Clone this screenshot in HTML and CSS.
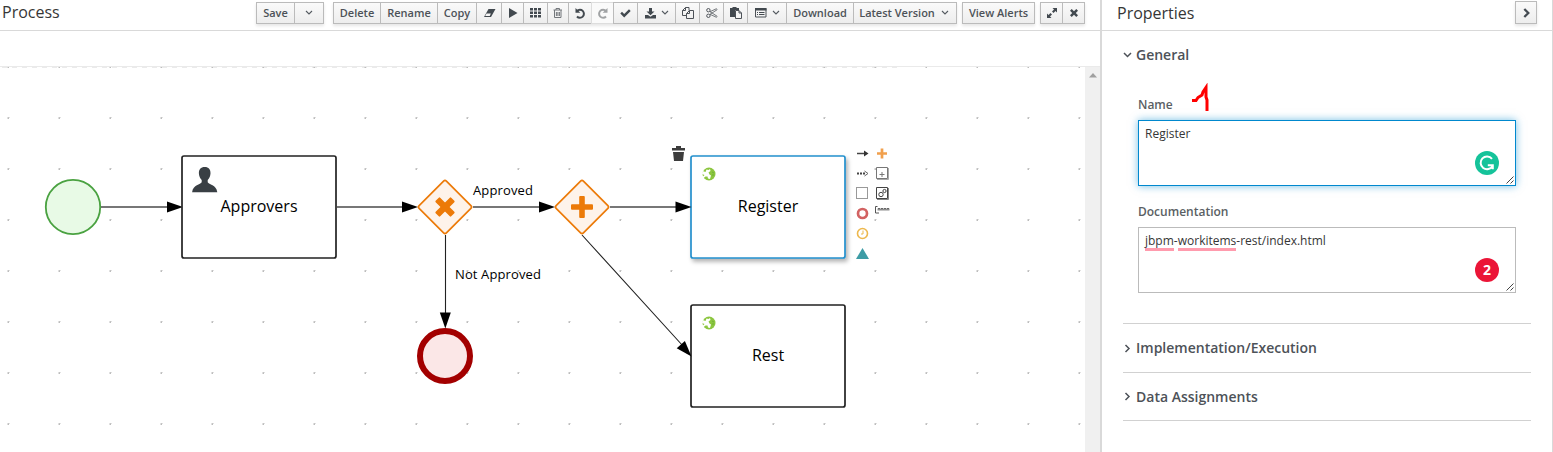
FILE: index.html
```
<!DOCTYPE html>
<html lang="en">
<head>
<meta charset="utf-8">
<title>Process</title>
<link rel="stylesheet" href="styles.css">
</head>
<body>
<div class="app">
  <main class="editor">
    <header class="toolbar">
      <h1 class="title">Process</h1>
      <div class="actions">
        <div class="group">
          <button class="btn w38">Save</button>
          <button class="btn w29"><svg width="8" height="6" viewBox="0 0 8 6"><path class="line" d="M1 1l3 3 3-3"/></svg></button>
        </div>
        <div class="group main-group">
          <button class="btn w47">Delete</button>
          <button class="btn w57">Rename</button>
          <button class="btn w39">Copy</button>
          <button class="btn w25"><svg width="13" height="10" viewBox="0 0 13 10"><path d="M5.500 1h7L8 9H1z"/><path d="M3.500 5.600h4.300L6.800 8H2.200z" fill="#f5f5f5" class="paper"/></svg></button>
          <button class="btn w22"><svg width="10" height="10" viewBox="0 0 10 10"><path d="M1 0l8.500 5L1 10z"/></svg></button>
          <button class="btn w24"><svg width="12" height="10" viewBox="0 0 12 10"><path d="M0 0h3v2.500H0zM4 0h3v2.500H4zM8 0h3v2.500H8zM0 3.500h3V6H0zM4 3.500h3V6H4zM8 3.500h3V6H8zM0 7h3v2.500H0zM4 7h3v2.500H4zM8 7h3v2.500H8z"/></svg></button>
          <button class="btn w21"><svg width="10" height="10" viewBox="0 0 10 10"><path class="thin soft" d="M.5 2h8.500M3 2V.5h3.500V2M1.500 2v7.500h6.500V2M3.400 4v4M4.900 4v4M6.400 4v4"/></svg></button>
          <button class="btn w23"><svg width="11" height="11" viewBox="0 0 11 11"><path class="bold" d="M2 3a4 4 0 1 1 0 5.500"/><path d="M.5 0v4.800h4.800z"/></svg></button>
          <button class="btn w22 disabled"><svg width="11" height="11" viewBox="0 0 11 11"><path class="bold" d="M9 3a4 4 0 1 0 0 5.500"/><path d="M10.500 0v4.800H5.700z"/></svg></button>
          <button class="btn w24"><svg width="11" height="9" viewBox="0 0 11 9"><path d="M.3 4.500l1.700-1.700 2.200 2.200L9 .3 10.700 2 4.200 8.500z"/></svg></button>
          <button class="btn w38"><svg width="11" height="11" viewBox="0 0 11 11"><path d="M4 0h3v3.500h2.500L5.500 7.300 1.500 3.500H4zM0 7h3l2.500 1.800L8 7h3v3.500H0z"/></svg><svg class="caret" width="8" height="6" viewBox="0 0 8 6"><path class="line" d="M1 1l3 3 3-3"/></svg></button>
          <button class="btn w24"><svg width="12" height="12" viewBox="0 0 12 12"><path class="thin" d="M3.500.5H7v3M3.500.5L.5 3.500v5H4.500M3.500.5v3h-3M7.500 3.500h4v8h-7V6.500zM7.500 3.500v3h-3"/></svg></button>
          <button class="btn w24"><svg width="12" height="10" viewBox="0 0 12 10"><path class="thin soft" d="M4 3.700L11 8.200M4 6.300L11 1.800M4 3.700l6.500-3 .7 1M4 6.300l6.500 3 .7-1"/><circle class="thin" cx="2.400" cy="2.200" r="1.700"/><circle class="thin" cx="2.400" cy="7.800" r="1.700"/></svg></button>
          <button class="btn w24"><svg width="12" height="12" viewBox="0 0 12 12"><path d="M0 1h2.500V0h4v1H9v2H5v7H0z"/><path class="thin paper" d="M5.500 3.500H9L11.500 6v5.500h-6zM9 3.500V6h2.500"/></svg></button>
          <button class="btn w39"><svg width="12" height="10" viewBox="0 0 12 10"><path class="thin" d="M.5.5h10.500v8.500H.5z"/><path d="M0 0h11.500v2.500H0zM2 4h1v1H2zM4 4h5.500v1H4zM2 6h1v1H2zM4 6h5.500v1H4z"/></svg><svg class="caret" width="8" height="6" viewBox="0 0 8 6"><path class="line" d="M1 1l3 3 3-3"/></svg></button>
          <button class="btn w67">Download</button>
          <button class="btn w103">Latest Version<svg class="caret wide" width="8" height="6" viewBox="0 0 8 6"><path class="line" d="M1 1l3 3 3-3"/></svg></button>
        </div>
        <div class="group"><button class="btn w72">View Alerts</button></div>
        <div class="group">
          <button class="btn w22"><svg width="10" height="10" viewBox="0 0 10 10"><path d="M5.500 0H10v4.500L8.500 3 6.500 5 5 3.500l2-2zM0 5.500L1.500 7l2-2L5 6.500l-2 2L4.500 10H0z"/></svg></button>
          <button class="btn w22"><svg width="8" height="8" viewBox="0 0 8 8"><path d="M1.700 0L4 2.200 6.300 0 8 1.700 5.800 4 8 6.300 6.300 8 4 5.800 1.700 8 0 6.300 2.200 4 0 1.700z"/></svg></button>
        </div>
      </div>
    </header>
    <div class="tabs"></div>
    <div class="workspace">
      <svg class="canvas" width="1085" height="385" viewBox="0 67 1085 385">
        <defs>
          <pattern id="grid" x="7" y="64" width="51" height="51" patternUnits="userSpaceOnUse">
            <rect x="0.500" y="2" width="2" height="1" fill="#c4c4c4"/><rect x="0.500" y="3" width="1.500" height="1" fill="#bcbcbc"/>
          </pattern>
          <filter id="shadow" x="-10%" y="-10%" width="125%" height="125%"><feDropShadow dx="2" dy="3" stdDeviation="2" flood-color="#000" flood-opacity=".3"/></filter>
          <g id="service">
            <circle r="6.500" fill="#8cc63f"/>
            <path d="M-6.500-3l3 1 1-2.500 2 .5 1.500-1 .5 2-2 1.500 1 2 1.500 1-1 3.500-2-.5-.5-2-2 0-2.500 2-.5-1.500 2-2-2.500-1z" fill="#fff"/>
            <path d="M3-2l2 1M3 1h2" stroke="#65a834" stroke-width=".7"/>
          </g>
          <path id="arrow" d="M0 0l-16-5.500v11z"/>
        </defs>
        <path d="M2 67.500h895" stroke="#ebebeb" stroke-dasharray="5 5"/>
        <rect x="0" y="67" width="1085" height="385" fill="url(#grid)"/>

        <g class="flow">
          <path d="M101 207h70M337 207h68M473 207h69M610 207h68"/>
          <path class="fine" d="M445.500 235v80M582 235l101 111"/>
        </g>
        <use href="#arrow" x="183" y="207"/>
        <use href="#arrow" x="418" y="207"/>
        <use href="#arrow" x="555" y="207"/>

        <circle cx="73" cy="207" r="27.200" fill="#e8fae6" stroke="#4aa241" stroke-width="1.800"/>

        <rect class="task" x="182" y="156" width="154" height="102" rx="2"/>
        <path d="M204.700 167c4 0 6 2.500 5.800 6.500-.2 3-1.300 5-2.800 6.500v2.300c1.200 2.400 8.500 2.200 9.600 9.900h-25.200c1.100-7.700 8.400-7.500 9.600-9.900V180c-1.500-1.500-2.600-3.500-2.800-6.500-.2-4 1.800-6.500 5.800-6.500z" fill="#393f44"/>
        <text class="name" x="259" y="212">Approvers</text>

        <g class="gateway">
          <rect x="425.700" y="187.700" width="38.600" height="38.600" rx="2" transform="rotate(45 445 207)"/>
          <rect x="562.700" y="187.700" width="38.600" height="38.600" rx="2" transform="rotate(45 582 207)"/>
        </g>
        <g class="cross">
          <g transform="rotate(45 445 207)"><rect x="441.800" y="196" width="6.400" height="22" rx="1"/><rect x="434" y="203.800" width="22" height="6.400" rx="1"/></g>
          <rect x="579.200" y="196" width="5.600" height="22" rx="1"/><rect x="571" y="204.200" width="22" height="5.600" rx="1"/>
        </g>

        <text class="label" x="473" y="195" textLength="60">Approved</text>
        <text class="label" x="455" y="279" textLength="86">Not Approved</text>

        <circle cx="445" cy="356" r="25" fill="#fbe7e7" stroke="#a30000" stroke-width="6"/>
        <use href="#arrow" transform="translate(445.300 328.500) rotate(90)"/>

        <rect class="task selected" x="691" y="156" width="154" height="102" rx="2" filter="url(#shadow)"/>
        <use href="#arrow" x="691.500" y="207"/>
        <use href="#service" x="709" y="174"/>
        <text class="name" x="768" y="212">Register</text>

        <rect class="task" x="691" y="305" width="154" height="102" rx="2"/>
        <use href="#arrow" transform="translate(691.500 356.500) rotate(48)"/>
        <use href="#service" x="709" y="323"/>
        <text class="name" x="768" y="361">Rest</text>

        <path d="M672 148h4v-2h5v2h4v2.500h-13zM673 152h11l-1 9h-9z" fill="#3c3c3c"/>

        <g fill="none" stroke="#444">
          <path d="M857 153.500h9" stroke-width="1.500"/><path d="M864 150.500l4.500 3-4.500 3z" fill="#333" stroke="none"/>
          <path d="M857 173.500h8" stroke-width="1.800" stroke-dasharray="2 1"/><path d="M864.500 171l3.500 2.500-3.500 2.500" stroke="#666"/>
          <rect x="856.500" y="187.500" width="11" height="11" stroke="#999"/>
          <circle cx="862.500" cy="213.500" r="4.500" stroke="#d26262" stroke-width="2.700"/>
          <circle cx="862.500" cy="233.500" r="5" stroke="#edb84d" stroke-width="1.600"/><path d="M863 230.500v3.500h-2" stroke="#edb84d"/>
          <path d="M862.500 248l6.500 11h-13z" fill="#3d9ca5" stroke="none"/>
          <path d="M882 148.500v10M877 153.500h10" stroke="#f1a04d" stroke-width="2.700"/>
          <path d="M876.500 167.500h11v11h-11z" stroke="#777"/><path d="M888.500 168v11.500H877" stroke="#aaa"/><path d="M882 172v5M879.500 174.500h5" stroke="#777"/>
          <path d="M876.500 187.500h11v11h-11z"/><path d="M888.500 188v11.500H877" stroke="#888"/><circle cx="881" cy="194.500" r="2.200"/><circle cx="884.500" cy="191" r="1.600"/>
          <path d="M877.500 206.500h-2v6.500h3.500" stroke="#555"/><path d="M877.500 209.500h12" stroke="#8c8c8c" stroke-width="2"/><path d="M878 208.500h11" stroke="#666" stroke-dasharray="2 1"/>
        </g>
      </svg>
      <div class="scrollbar"><svg width="8" height="5" viewBox="0 0 8 5"><path d="M4 0l4 4.500H0z" fill="#9f9f9f"/></svg></div>
    </div>
  </main>

  <aside class="properties">
    <header class="panel-head">
      <h2 class="title">Properties</h2>
      <button class="collapse"><svg width="7" height="10" viewBox="0 0 7 10"><path d="M1.300 1l4 4-4 4" fill="none" stroke="#444b52" stroke-width="2.300"/></svg></button>
    </header>
    <div class="sections">
      <section class="general">
        <h3 class="section-title"><svg width="9" height="8" viewBox="0 0 9 8"><path class="chev" d="M1 2l3.500 3.500L8 2"/></svg>General</h3>
        <div class="field">
          <div class="field-label">Name</div>
          <div class="area focused">Register
            <span class="badge"><svg width="24" height="24" viewBox="0 0 24 24"><circle cx="12" cy="12" r="12" fill="#15c39a"/><path d="M17 7.800A6.400 6.400 0 1 0 17.600 15M12.800 14.300h5v4" fill="none" stroke="#fff" stroke-width="2"/></svg></span>
            <svg class="grip" width="8" height="8" viewBox="0 0 8 8"><path d="M.5 7.500l7-7M4.500 7.500l3-3"/></svg>
          </div>
        </div>
        <div class="field doc">
          <div class="field-label">Documentation</div>
          <div class="area"><span class="typo">jbpm</span>-<span class="typo">workitems</span>-rest/index.html
            <span class="badge count">2</span>
            <svg class="grip" width="8" height="8" viewBox="0 0 8 8"><path d="M.5 7.500l7-7M4.500 7.500l3-3"/></svg>
          </div>
        </div>
        <svg class="annotation" width="20" height="30" viewBox="0 0 20 30"><path d="M1 17.500h4l2-3 4-2.500 1-3 3-4.500V14l1 3v11" fill="none" stroke="red" stroke-width="3"/></svg>
      </section>
      <h3 class="section-title folded"><svg width="9" height="9" viewBox="0 0 9 9"><path class="chev" d="M2.500 1L6 4.500 2.500 8"/></svg>Implementation/Execution</h3>
      <h3 class="section-title folded last"><svg width="9" height="9" viewBox="0 0 9 9"><path class="chev" d="M2.500 1L6 4.500 2.500 8"/></svg>Data Assignments</h3>
    </div>
  </aside>
</div>
</body>
</html>
```
FILE: styles.css
```
* { box-sizing: border-box; }
body { margin: 0; background: #fff; color: #333; font: 12px/20px "Open Sans", "Noto Sans", sans-serif; overflow: hidden; }
h1, h2, h3 { margin: 0; }
svg { display: block; flex: none; }
.app { display: flex; width: 1553px; height: 452px; }
.editor { width: 1100px; display: flex; flex-direction: column; }
.toolbar { height: 31px; border-bottom: 1px solid #d9d9d9; display: flex; justify-content: space-between; padding: 2px 15px 0 2px; }
.title { font-size: 16px; font-weight: 400; line-height: 20px; color: #363636; }
.actions { display: flex; gap: 5px; }
.group { display: flex; height: 22px; border-right: 1px solid #bbb; box-shadow: 0 2px 3px rgba(3,3,3,.1); }
.group:first-child { margin-right: 4px; }
.btn { flex: none; height: 22px; margin: 0; padding: 0; border: 1px solid #bbb; border-right: 0; background: linear-gradient(#fafafa, #ededed); color: #4d5258; font: 600 11px/20px "Open Sans", sans-serif; display: flex; align-items: center; justify-content: center; white-space: nowrap; }
.btn svg { fill: #42494f; }
.btn .line { fill: none; stroke: #555b61; stroke-width: 1.1; }
.btn .thin { fill: none; stroke: #4d5258; stroke-width: 1; }
.btn .soft { stroke: #73777b; }
.btn .paper { fill: #f5f5f5; }
.btn .bold { fill: none; stroke: #42494f; stroke-width: 2; }
.disabled { background: #fafafa; border-color: #ddd; }
.btn.disabled svg { fill: #a0a2a4; }
.btn.disabled .bold { stroke: #a0a2a4; }
.caret { margin-left: 5px; }
.wide { margin: 0 2px 0 6px; }
.w21 { width: 21px; } .w22 { width: 22px; } .w23 { width: 23px; } .w24 { width: 24px; }
.w25 { width: 25px; } .w29 { width: 29px; } .w38 { width: 38px; } .w39 { width: 39px; }
.w47 { width: 47px; } .w57 { width: 57px; } .w67 { width: 67px; } .w72 { width: 72px; } .w103 { width: 103px; }
.tabs { height: 36px; border-bottom: 1px solid #eaeaea; }
.workspace { display: flex; height: 385px; }
.scrollbar { width: 15px; background: #f0f0f0; padding: 6px 0 0 4px; }
.name { font: 16px "Open Sans", sans-serif; text-anchor: middle; fill: #000; }
.label { font: 13px "Open Sans", sans-serif; fill: #000; }
.flow { fill: none; stroke: #777; stroke-width: 2; }
.fine { stroke: #222; stroke-width: 1.1; }
.task { fill: #fff; stroke: #222; stroke-width: 1.7; }
.selected { stroke: #2490cd; }
.gateway { fill: #fef3ea; stroke: #ec7a08; stroke-width: 1.7; }
.cross { fill: #ec7a08; }
.properties { width: 453px; border-left: 2px solid #d9d9d9; border-right: 1px solid #d9d9d9; }
.panel-head { height: 31px; border-bottom: 1px solid #d9d9d9; display: flex; justify-content: space-between; padding: 1px 15px 0 15px; }
.panel-head .title { line-height: 24px; }
.collapse { width: 22px; height: 23px; padding: 0; border: 1px solid #bbb; background: linear-gradient(#fafafa, #ededed); box-shadow: 0 2px 3px rgba(3,3,3,.1); display: flex; align-items: center; justify-content: center; }
.sections { padding: 0 21px 0 21px; }
.general { position: relative; height: 293px; border-bottom: 1px solid #d1d1d1; padding-top: 14px; }
.section-title { display: flex; align-items: center; gap: 4px; font-size: 14px; font-weight: 600; line-height: 20px; color: #4d5258; }
.chev { fill: none; stroke: #4d5258; stroke-width: 1.5; }
.folded { height: 49px; border-bottom: 1px solid #d1d1d1; }
.last { height: 48px; }
.field { padding: 30px 15px 0 15px; }
.doc { padding-top: 16px; }
.field-label { font-weight: 600; color: #5a5f64; height: 25px; }
.area { position: relative; width: 378px; height: 66px; border: 1px solid #bbb; padding: 3px 6px; color: #363636; line-height: 20px; }
.focused { border-color: #0088ce; box-shadow: 0 0 8px rgba(0,136,206,.55); }
.badge { position: absolute; right: 16px; bottom: 10px; width: 24px; height: 24px; }
.count { border-radius: 50%; background: #eb1537; color: #fff; font: 700 14px/24px "Open Sans", sans-serif; text-align: center; }
.typo { box-shadow: 0 3px #ff9bad; display: inline-block; height: 17px; line-height: 20px; vertical-align: top; }
.grip { position: absolute; right: 1px; bottom: 1px; fill: none; stroke: #444; stroke-width: 1; }
.annotation { position: absolute; left: 68px; top: 52px; }
```
